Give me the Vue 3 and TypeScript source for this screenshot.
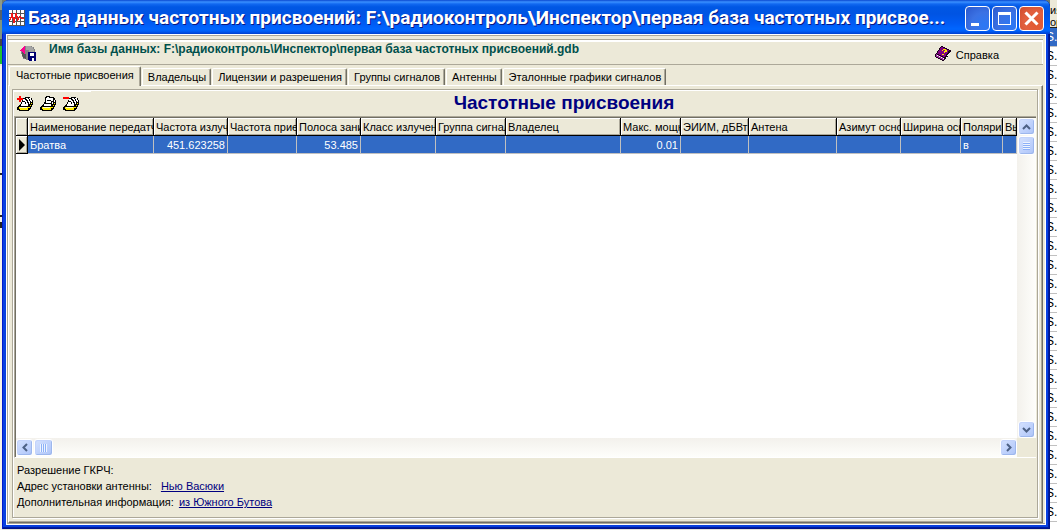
<script setup lang="ts">
import { ref } from 'vue'

interface Column { title: string; width: number; value: string; numeric?: boolean }

const columns: Column[] = [
  { title: 'Наименование передатчика', width: 126, value: 'Братва' },
  { title: 'Частота излучения', width: 74, value: '451.623258', numeric: true },
  { title: 'Частота приема', width: 69, value: '' },
  { title: 'Полоса занимаемая', width: 64, value: '53.485', numeric: true },
  { title: 'Класс излучения', width: 75, value: '' },
  { title: 'Группа сигналов', width: 70, value: '' },
  { title: 'Владелец', width: 115, value: '' },
  { title: 'Макс. мощность', width: 60, value: '0.01', numeric: true },
  { title: 'ЭИИМ, дБВт', width: 68, value: '' },
  { title: 'Антена', width: 88, value: '' },
  { title: 'Азимут основной', width: 64, value: '' },
  { title: 'Ширина основная', width: 60, value: '' },
  { title: 'Поляризация', width: 42, value: 'в' },
  { title: 'Высота', width: 0, value: '' },
]

const tabs = ['Частотные присвоения', 'Владельцы', 'Лицензии и разрешения', 'Группы сигналов', 'Антенны', 'Эталонные графики сигналов']
const active = ref(0)
const tools = [
  { name: 'Добавить', kind: 'add' },
  { name: 'Изменить', kind: 'edit' },
  { name: 'Удалить', kind: 'remove' },
]
</script>

<template>
  <div class="desktop">
    <div class="behind-left" aria-hidden="true"></div>
    <main class="window">
      <header class="titlebar">
        <svg class="app-icon" width="16" height="16" viewBox="0 0 16 16" shape-rendering="crispEdges" aria-hidden="true">
          <rect width="16" height="16" fill="#fff" />
          <path d="M0 3.5H16M0 7.5H16M0 11.5H16M0 15.5H16M3.5 0V16M7.5 0V16M11.5 0V16M15.5 0V16" stroke="#555" fill="none" />
          <path d="M0 11L2 8L3 3L5 13L7 4L9 10L11 6L13 9L15 8" stroke="#f01818" stroke-width="1.300" fill="none" />
        </svg>
        <h1>База данных частотных присвоений: F:\радиоконтроль\Инспектор\первая база частотных присвое...</h1>
        <div class="caption-buttons">
          <button type="button" aria-label="Свернуть"><svg width="23" height="23" viewBox="0 0 23 23"><path d="M5 16H13V19H5Z" fill="#fff" /></svg></button>
          <button type="button" aria-label="Развернуть"><svg width="23" height="23" viewBox="0 0 23 23" shape-rendering="crispEdges"><path d="M5 5H18V18H5ZM6 8V17H17V8Z" fill="#fff" fill-rule="evenodd" /></svg></button>
          <button type="button" class="close" aria-label="Закрыть"><svg width="23" height="23" viewBox="0 0 23 23"><path d="M5.500 5.500L17.500 17.500M17.500 5.500L5.500 17.500" stroke="#fff" stroke-width="3" /></svg></button>
        </div>
      </header>

      <div class="client">
        <div class="dbbar">
          <button type="button" class="dbicon" aria-label="Открыть базу данных">
            <svg width="17" height="17" viewBox="0 0 17 17" shape-rendering="crispEdges">
              <path d="M5 1H12V2H14V4H15V7H16V11H14V15H6V14H3V12H2V9H1V6H3V3H4V2H5Z" fill="#858585" />
              <path d="M6 1H11V2H13V4H14V7H9V5H6Z" fill="#a4a4a4" />
              <path d="M2 7H4V9H6V14H5V13H3V11H2Z" fill="#555" />
              <path d="M0 5H1V4H2V3H3V2H4V1H5V9H4V8H3V7H2V6H0Z" fill="#ff0090" />
              <path d="M8 7H16V16H9V15H8Z" fill="#000070" />
              <path d="M10 8H14V11H10ZM10 13H14V16H10Z" fill="#fff" />
              <path d="M10 13H12V16H10Z" fill="#000070" />
            </svg>
          </button>
          <strong>Имя базы данных: F:\радиоконтроль\Инспектор\первая база частотных присвоений.gdb</strong>
          <button type="button" class="help">
            <svg width="17" height="16" viewBox="0 0 17 16" shape-rendering="crispEdges" aria-hidden="true">
              <path d="M6 0H8V1H10V2H12V3H14V4H16V6H15V8H14V9H13V11H12V12H11V13H10V14H9V15H7V14H5V13H3V12H1V11H0V8H1V7H2V5H3V4H4V2H5V1H6Z" fill="#17001a" />
              <path d="M6 1H8V2H10V3H12V4H14V5H13V7H12V8H11V10H10V11H8V10H6V9H4V8H2V7H3V5H4V4H5V2H6Z" fill="#800080" />
              <path d="M1 8H2V9H4V10H6V11H8V12H9V14H7V13H5V12H3V11H1Z" fill="#a030a0" />
              <path d="M2 9H3V10H5V11H7V12H9V13H8V12H6V11H4V10H2ZM10 12H11V11H12V9H13V8H14V7H15V8H14V9H13V10H12V12H10Z" fill="#fff" />
              <path d="M8 3H11V4H12V6H10V7H9V5H10V4H8V5H7V4H8ZM7 8H9V9H7Z" fill="#ffe400" />
            </svg>
            <span>Справка</span>
          </button>
        </div>

        <div class="tabs" role="tablist">
          <button v-for="(tab, i) in tabs" :key="tab" type="button" role="tab" :aria-selected="i === active" :class="{ active: i === active }" @click="active = i">{{ tab }}</button>
        </div>

        <section class="page">
          <div class="group">
            <div class="section-head">
              <div class="tools">
                <button v-for="tool in tools" :key="tool.kind" type="button" :aria-label="tool.name">
                  <svg width="17" height="16" viewBox="0 0 17 16" shape-rendering="crispEdges">
                    <path d="M6 2H8V1H13V2H15V4H16V9H15V11H14V13H13V14H12V15H2V14H0V11H1V10H2V9H3V8H4V6H5V4H6Z" fill="#000" />
                    <path d="M6 3H8V4H9V5H10V7H11V10H4V8H5V6H6ZM9 2H11V3H12V5H13V8H12V6H11V4H10V3H9ZM12 2H14V4H15V6H14V5H13V3H12Z" fill="#fff" />
                    <path d="M6 5H8V6H9V8H8V7H6Z" fill="#000" />
                    <path d="M6 6H8V7H6Z" fill="#fff" />
                    <path d="M2 11H12V12H11V14H3V13H2ZM12 11H13V12H12ZM13 9H14V10H13ZM14 7H15V8H14Z" fill="#ffee00" />
                    <path d="M3 11H10V12H3Z" fill="#fffbd0" />
                    <path v-if="tool.kind === 'add'" d="M0 2H2V0H4V2H6V4H4V6H2V4H0Z" fill="#f00" />
                    <path v-if="tool.kind === 'remove'" d="M0 1H6V3H0Z" fill="#f00" />
                    <template v-if="tool.kind === 'edit'">
                      <path d="M5 1H6V0H10V1H14V6H12V8H5Z" fill="#000" />
                      <path d="M6 2H7V1H9V2H13V5H11V7H6Z" fill="#fff" />
                      <path d="M7 4H11V5H7Z" fill="#000" />
                    </template>
                  </svg>
                </button>
              </div>
              <h2>Частотные присвоения</h2>
            </div>

            <div class="grid">
              <div class="viewport">
                <table>
                  <colgroup>
                    <col class="marker-col">
                    <col v-for="c in columns" :key="c.title" :style="{ width: c.width ? c.width + 'px' : 'auto' }">
                  </colgroup>
                  <thead>
                    <tr><th class="marker"></th><th v-for="c in columns" :key="c.title" scope="col">{{ c.title }}</th></tr>
                  </thead>
                  <tbody>
                    <tr>
                      <td class="marker"><svg width="7" height="12" viewBox="0 0 7 12" aria-hidden="true"><path d="M0 0L6 6L0 12Z" /></svg></td>
                      <td v-for="c in columns" :key="c.title" :class="{ numeric: c.numeric }">{{ c.value }}</td>
                    </tr>
                  </tbody>
                </table>
              </div>
              <div class="vscroll">
                <button type="button" aria-label="Вверх"><svg width="9" height="6" viewBox="0 0 9 6"><path d="M1 5L4.500 1.500L8 5" /></svg></button>
                <div class="thumb"><i></i></div>
                <button type="button" class="end" aria-label="Вниз"><svg width="9" height="6" viewBox="0 0 9 6"><path d="M1 1L4.500 4.500L8 1" /></svg></button>
              </div>
              <div class="hscroll">
                <button type="button" aria-label="Влево"><svg width="6" height="9" viewBox="0 0 6 9"><path d="M5 1L1.500 4.500L5 8" /></svg></button>
                <div class="thumb"><i></i></div>
                <button type="button" class="end" aria-label="Вправо"><svg width="6" height="9" viewBox="0 0 6 9"><path d="M1 1L4.500 4.500L1 8" /></svg></button>
              </div>
            </div>

            <footer>
              <p>Разрешение ГКРЧ:</p>
              <p class="address">Адрес установки антенны: <a href="#address">Нью Васюки</a></p>
              <p>Дополнительная информация: <a href="#info">из Южного Бутова</a></p>
            </footer>
          </div>
        </section>
      </div>
    </main>
    <div class="behind-right" aria-hidden="true">
      <div class="behind-head">ия<br>ор</div>
      <div v-for="n in 26" :key="n" class="behind-row">S.</div>
    </div>
  </div>
</template>

<style>
body { margin: 0; background: #ece9d8; }
</style>

<style scoped>
.desktop {
  display: grid;
  grid-template-columns: 2px minmax(0, 1fr) 7px;
  height: 100vh;
  overflow: hidden;
  font: 11px/14px "Liberation Sans", Arial, sans-serif;
  color: #000;
  background: linear-gradient(#6b7a70 0 46px, #e4e2d8 46px);
}
.desktop * { box-sizing: border-box; }
button { margin: 0; padding: 0; border: 0; background: none; font: inherit; color: inherit; }
svg { display: block; }
h1, h2, p { margin: 0; white-space: nowrap; }

.behind-left {
  background: linear-gradient(#8c9a8a 0 10px, #56616a 10px 20px, #7f9480 20px 39px, #444 39px 46px, #20c030 46px 64px, #ece9d8 64px 66px, #f4f2ea 66px 173px, #222 173px 175px, #f4f2ea 175px 215px, #222 215px 217px, #f4f2ea 217px 222px, #222 222px 228px, #f4f2ea 228px);
}
.behind-right { overflow: hidden; background: #fff; font: 12px/18px "Liberation Sans", Arial, sans-serif; }
.behind-head { height: 28px; padding-top: 4px; border-bottom: 1px solid #222; background: #ece9d8; font-size: 11px; line-height: 12px; }
.behind-row { height: 19px; margin-left: -4px; border-bottom: 1px solid #c0c0c0; }
.behind-head + .behind-row { background: #316ac5; color: #fff; }

.window {
  display: flex;
  flex-direction: column;
  min-width: 0;
  margin-bottom: 1px;
  padding: 0 4px 4px;
  border-radius: 7px 7px 0 0;
  background: #0840e0;
  box-shadow: inset 1px 0 #0019cf, inset -1px -1px #00138c, inset -2px -2px #001ea0;
}
.titlebar {
  display: flex;
  align-items: center;
  height: 34px;
  margin: 0 -4px;
  padding: 2px 6px 0 7px;
  border-radius: 7px 7px 0 0;
  background: linear-gradient(#0a48d0 0, #3a90ff 2px, #1168f0 4px, #0057e4 7px, #0054e3 14px, #005cf5 24px, #0066ff 29px, #0060f8 31px, #003fd0 34px);
}
.app-icon { flex: none; margin-right: 3px; }
h1 {
  flex: 1;
  min-width: 0;
  overflow: hidden;
  font: bold 19px/28px Roboto, "Noto Sans", sans-serif;
  color: #fff;
  text-shadow: 1px 1px #0a1883;
}
.caption-buttons { display: flex; gap: 2px; }
.caption-buttons button {
  width: 25px;
  height: 25px;
  border: 1px solid #fff;
  border-radius: 4px;
  background: radial-gradient(circle at 80% 80%, #2b78f5, #3b72e4 50%, #2a57cc);
}
.caption-buttons .close { background: radial-gradient(circle at 70% 70%, #e2572f, #e2603f 50%, #cf4a2b); }

.client {
  flex: 1;
  display: flex;
  flex-direction: column;
  min-height: 0;
  padding: 0 2px 1px 1px;
  border: 1px solid #fff;
  background: #ece9d8;
  box-shadow: inset 1px 1px #aca899, inset 0 -1px #aca899;
}
.dbbar {
  display: flex;
  align-items: flex-start;
  height: 26px;
  margin-top: 4px;
  border-top: 1px solid #aca899;
  border-bottom: 1px solid #aca899;
  box-shadow: inset 0 2px #fff, inset -1px 0 #fff;
}
.dbicon { margin: 5px 12px 0; }
.dbbar strong { flex: 1; padding-top: 2px; font-size: 12px; color: #00504c; white-space: nowrap; }
.help { display: flex; gap: 4px; margin: 6px 44px 0 0; }
.help span { padding-top: 2px; }

.tabs { display: flex; align-items: flex-end; height: 20px; padding-left: 1px; }
.tabs button {
  height: 17px;
  margin-right: 1px;
  padding: 0 4px 0 5px;
  border-left: 1px solid #fff;
  border-top: 1px solid #fff;
  border-right: 1px solid #716f64;
  border-radius: 2px 2px 0 0;
  box-shadow: inset -1px 0 #aca899;
  white-space: nowrap;
}
.tabs .active { position: relative; height: 20px; margin-bottom: -1px; padding: 0 6px 3px; background: #ece9d8; }

.page {
  flex: 1;
  display: flex;
  min-height: 0;
  padding: 3px 4px 4px 3px;
  border: 1px solid #fff;
  border-right-color: #716f64;
  border-bottom-color: #716f64;
  box-shadow: inset -1px -1px #aca899;
}
.group {
  flex: 1;
  display: flex;
  flex-direction: column;
  min-width: 0;
  border: 1px solid #aca899;
  box-shadow: inset 1px 1px #fff, 1px 1px #fff;
  padding: 1px 0 0 1px;
}
.section-head { display: flex; height: 25px; }
.tools { display: flex; align-items: flex-start; gap: 6px; width: 77px; padding: 4px 0 0 3px; border-top: 1px solid #fff; }
h2 { flex: 1; text-align: center; font: bold 19px/24px "Liberation Sans", Arial, sans-serif; color: #000080; }

.grid {
  flex: 1;
  display: grid;
  grid-template: minmax(0, 1fr) 19px / minmax(0, 1fr) 19px;
  min-height: 0;
  margin-right: 1px;
  border-left: 1px solid #aca899;
  border-top: 1px solid #aca899;
  border-bottom: 1px solid #fff;
  box-shadow: inset 1px 1px #716f64;
  padding: 1px 0 0 1px;
}
.viewport { overflow: hidden; background: #fff; }
table { width: 100%; table-layout: fixed; border-collapse: separate; border-spacing: 0; }
.marker-col { width: 12px; }
th, td { height: 18px; overflow: hidden; padding: 0 2px; font-weight: normal; text-align: left; white-space: nowrap; line-height: 16px; }
th {
  padding-top: 1px;
  border-right: 1px solid #000;
  border-bottom: 1px solid #000;
  background: #ece9d8;
  box-shadow: inset 1px 1px #fff, inset -1px -1px #aca899;
}
td { border-right: 1px solid #c0c0c0; border-bottom: 1px solid #c0c0c0; background: #316ac5; color: #fff; }
td.numeric { text-align: right; }
td.marker { padding: 0 3px; border-color: #000; background: #ece9d8; box-shadow: inset 1px 1px #fff, inset -1px -1px #aca899; }

.vscroll, .hscroll { display: flex; padding: 0 1px; background: linear-gradient(90deg, #f3f1ec, #fefefb); }
.vscroll { flex-direction: column; }
.hscroll { padding: 1px 0; background: linear-gradient(#f3f1ec, #fefefb); }
.vscroll button, .hscroll button, .thumb {
  display: flex;
  align-items: center;
  justify-content: center;
  flex: none;
  width: 17px;
  height: 17px;
  border: 1px solid #fff;
  border-radius: 3px;
  background: linear-gradient(135deg, #d5e2fe, #b9cdfb 70%, #adc3f5);
  box-shadow: inset -1px -1px #9db7ed, inset 1px 1px #c3d3fb;
}
.vscroll .thumb { height: 19px; margin-top: 1px; }
.hscroll .thumb { width: 19px; margin-left: 1px; }
.vscroll .end { margin-top: auto; }
.hscroll .end { margin-left: auto; }
.vscroll path, .hscroll path { fill: none; stroke: #4d6185; stroke-width: 2; }
.thumb i { width: 7px; height: 8px; background: repeating-linear-gradient(#eef4fe 0 1px, #8cb0f8 1px 2px); }
.hscroll .thumb i { background: repeating-linear-gradient(90deg, #eef4fe 0 1px, #8cb0f8 1px 2px); }

footer { padding: 4px 3px 7px; line-height: 16px; }
footer a { margin-left: 2px; color: #000080; }
.address a { margin-left: 6px; }
</style>
